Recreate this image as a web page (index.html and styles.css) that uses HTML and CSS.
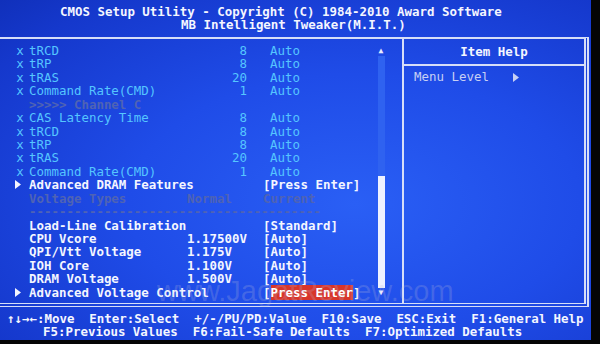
FILE: index.html
```html
<!DOCTYPE html>
<html lang="en">
<head>
  <meta charset="UTF-8">
  <title>CMOS Setup Utility - MB Intelligent Tweaker</title>
  <link rel="stylesheet" href="styles.css">
</head>
<body>
  <div class="screen">
    <div class="header">
      <div class="line title">CMOS Setup Utility - Copyright (C) 1984-2010 Award Software</div>
      <div class="line subtitle">MB Intelligent Tweaker(M.I.T.)</div>
    </div>

    <div class="box">
      <div class="left">
        <div class="rows">
          <div class="row off"><span class="mark">x</span><span class="name">tRCD</span><span class="val num">8</span><span class="set">Auto</span></div>
          <div class="row off"><span class="mark">x</span><span class="name">tRP</span><span class="val num">8</span><span class="set">Auto</span></div>
          <div class="row off"><span class="mark">x</span><span class="name">tRAS</span><span class="val num">20</span><span class="set">Auto</span></div>
          <div class="row off"><span class="mark">x</span><span class="name">Command Rate(CMD)</span><span class="val num">1</span><span class="set">Auto</span></div>
          <div class="row dim"><span class="mark"></span><span class="name">&gt;&gt;&gt;&gt;&gt; Channel C</span></div>
          <div class="row off"><span class="mark">x</span><span class="name">CAS Latency Time</span><span class="val num">8</span><span class="set">Auto</span></div>
          <div class="row off"><span class="mark">x</span><span class="name">tRCD</span><span class="val num">8</span><span class="set">Auto</span></div>
          <div class="row off"><span class="mark">x</span><span class="name">tRP</span><span class="val num">8</span><span class="set">Auto</span></div>
          <div class="row off"><span class="mark">x</span><span class="name">tRAS</span><span class="val num">20</span><span class="set">Auto</span></div>
          <div class="row off"><span class="mark">x</span><span class="name">Command Rate(CMD)</span><span class="val num">1</span><span class="set">Auto</span></div>
          <div class="row"><span class="mark"><svg width="6" height="9" viewBox="0 0 6 9"><path d="M0 0 L6 4.5 L0 9 Z" fill="#f4f6ff"/></svg></span><span class="name">Advanced DRAM Features</span><span class="val"></span><span class="set br">[Press Enter]</span></div>
          <div class="row dim"><span class="mark"></span><span class="name">Voltage Types</span><span class="val">Normal</span><span class="set br">Current</span></div>
          <div class="row dim"><span class="mark"></span><span class="name">---------------------------------------</span></div>
          <div class="row"><span class="mark"></span><span class="name">Load-Line Calibration</span><span class="val"></span><span class="set br">[Standard]</span></div>
          <div class="row"><span class="mark"></span><span class="name">CPU Vcore</span><span class="val">1.17500V</span><span class="set br">[Auto]</span></div>
          <div class="row"><span class="mark"></span><span class="name">QPI/Vtt Voltage</span><span class="val">1.175V</span><span class="set br">[Auto]</span></div>
          <div class="row"><span class="mark"></span><span class="name">IOH Core</span><span class="val">1.100V</span><span class="set br">[Auto]</span></div>
          <div class="row"><span class="mark"></span><span class="name">DRAM Voltage</span><span class="val">1.500V</span><span class="set br">[Auto]</span></div>
          <div class="row"><span class="mark"><svg width="6" height="9" viewBox="0 0 6 9"><path d="M0 0 L6 4.5 L0 9 Z" fill="#f4f6ff"/></svg></span><span class="name">Advanced Voltage Control</span><span class="val"></span><span class="set br">[<span class="sel">Press Enter</span>]</span></div>
        </div>
        <div class="scroll">
          <span class="arrow">&#9650;</span>
          <div class="track"><div class="thumb"></div></div>
          <span class="arrow">&#9660;</span>
        </div>
      </div>
      <div class="help">
        <div class="help-title">Item Help</div>
        <div class="help-body">
          <span>Menu Level</span>
          <svg width="6" height="9" viewBox="0 0 6 9"><path d="M0 0 L6 4.5 L0 9 Z" fill="#c8d0f4"/></svg>
        </div>
      </div>
    </div>

    <div class="footer">
      <div class="line keys">↑↓→←:Move  Enter:Select  +/-/PU/PD:Value  F10:Save  ESC:Exit  F1:General Help</div>
      <div class="line defaults">F5:Previous Values  F6:Fail-Safe Defaults  F7:Optimized Defaults</div>
    </div>

    <div class="watermark">www.JagatReview.com</div>
  </div>
</body>
</html>
```

FILE: styles.css
```css
html, body {
  margin: 0;
  padding: 0;
  background: #050505;
}
.screen {
  position: relative;
  width: 591px;
  height: 340px;
  overflow: hidden;
  background: radial-gradient(ellipse at 60% 60%, #2a5ff5 0%, #1f4ce8 45%, #1538cc 85%, #1030bb 100%);
  font-family: "DejaVu Sans Mono", "Liberation Mono", monospace;
  font-size: 12.45px;
  font-weight: bold;
  line-height: 13.44px;
  color: #f4f6ff;
}
.line, .row span, .help-body span {
  white-space: pre;
}
.header {
  padding: 5px 0 5px;
}
.title {
  padding-left: 60px;
}
.subtitle {
  padding-left: 181px;
}
.box {
  display: flex;
  height: 264px;
  margin-right: 2px;
  border-top: 2px solid #d6def8;
  border-right: 5px double #d6def8;
  border-bottom: 4px double #d6def8;
}
.left {
  display: flex;
  width: 402px;
  border-right: 2px solid #d6def8;
}
.rows {
  width: 376px;
  padding-top: 5px;
}
.row {
  display: grid;
  grid-template-columns: 17px 158px 60px 16px auto;
  padding-left: 12px;
  height: 13.44px;
}
.mark {
  display: flex;
  align-items: center;
  justify-content: center;
  padding-right: 1px;
}
.mark svg {
  margin-right: 4px;
}
.val.num {
  text-align: right;
}
.set {
  grid-column: 5;
  padding-left: 7px;
}
.set.br {
  padding-left: 0;
}
.off {
  color: #55c6ff;
  font-weight: normal;
}
.dim {
  color: #4f63b4;
}
.sel {
  background: #d8352a;
  color: #ffffff;
}
.scroll {
  display: flex;
  flex-direction: column;
  align-items: center;
  width: 10px;
  padding: 7px 0 5px;
  font-size: 8px;
  line-height: 10px;
  color: #e8ecff;
}
.track {
  flex: 1;
  width: 7px;
  display: flex;
  flex-direction: column;
  justify-content: flex-end;
  background: #2f62f0;
}
.thumb {
  height: 112px;
  background: #eef2ff;
}
.help {
  flex: 1;
  display: flex;
  flex-direction: column;
}
.help-title {
  text-align: center;
  padding: 6px 0 6px;
  border-bottom: 2px solid #d6def8;
}
.help-body {
  display: flex;
  align-items: center;
  gap: 24px;
  padding: 4px 0 0 10px;
  color: #c8d0f4;
  font-weight: normal;
}
.footer {
  padding-top: 5px;
}
.keys {
  padding-left: 7px;
}
.defaults {
  padding-left: 43px;
}
.watermark {
  position: absolute;
  left: 157px;
  top: 275px;
  font-family: "Liberation Sans", Arial, sans-serif;
  font-weight: normal;
  font-size: 29px;
  line-height: 32px;
  color: rgba(190, 190, 215, 0.22);
}
```
